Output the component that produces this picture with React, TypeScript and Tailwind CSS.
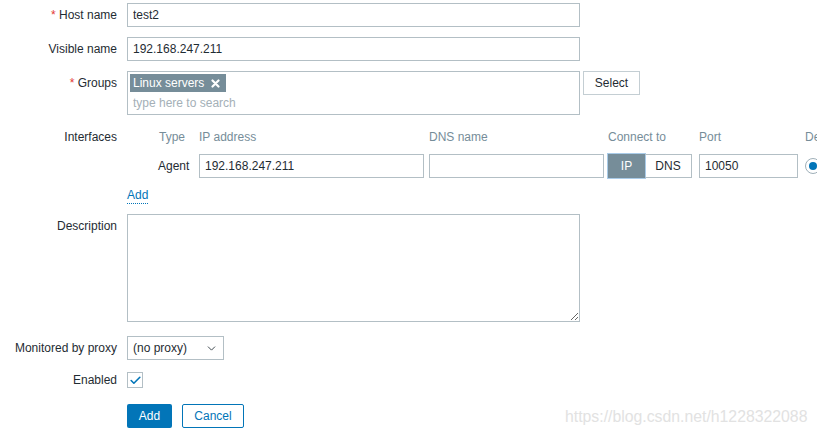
import { Check, ChevronDown } from 'lucide-react';

const font = { fontFamily: '"Liberation Sans", Arial, sans-serif' };

const inputCls =
  'h-[24px] border border-[#b3bfc5] bg-white px-[5px] text-[12px] text-[#1f2c33] outline-none';

function Label({ text, required, lh = 'leading-[24px]' }: { text: string; required?: boolean; lh?: string }) {
  return (
    <div className={`w-[117px] shrink-0 text-right text-[12px] text-[#1f2c33] ${lh}`}>
      {required && <span className="text-[#e33734]">* </span>}
      {text}
    </div>
  );
}

export default function App() {
  return (
    <div className="relative h-[436px] w-[817px] overflow-hidden bg-white" style={font}>
      <div className="flex flex-col pt-[3px]">
        <div className="flex gap-[10px]">
          <Label text="Host name" required />
          <input className={`${inputCls} w-[453px]`} defaultValue="test2" />
        </div>

        <div className="mt-[10px] flex gap-[10px]">
          <Label text="Visible name" />
          <input className={`${inputCls} w-[453px]`} defaultValue="192.168.247.211" />
        </div>

        <div className="mt-[10px] flex gap-[10px]">
          <Label text="Groups" required />
          <div className="flex h-[44px] w-[453px] flex-col border border-[#b3bfc5] px-[2px] pt-[2px]">
            <div className="flex h-[18px] w-fit items-center gap-[7px] bg-[#768d99] pl-[3px] pr-[6px] text-[12px] leading-[18px] text-white">
              Linux servers
              <svg width="9" height="9" viewBox="0 0 9 9">
                <path d="M1.5 1.5 L7.5 7.5 M7.5 1.5 L1.5 7.5" stroke="white" strokeWidth="2.2" strokeLinecap="round" />
              </svg>
            </div>
            <div className="pl-[3px] pt-[3px] text-[12px] leading-[16px] text-[#a4b0b7]">type here to search</div>
          </div>
          <button className="-ml-[7px] h-[24px] w-[57px] border border-[#c4ced3] bg-white text-[12px] text-[#1f2c33]">
            Select
          </button>
        </div>

        <div className="mt-[10px] flex gap-[10px]">
          <Label text="Interfaces" />
          <div className="flex flex-col">
            <div className="flex h-[24px] items-center text-[12px] text-[#768d99]">
              <div className="ml-[32px] w-[40px]">Type</div>
              <div className="w-[230px]">IP address</div>
              <div className="w-[179px]">DNS name</div>
              <div className="w-[91px]">Connect to</div>
              <div className="w-[106px]">Port</div>
              <div>Default</div>
            </div>
            <div className="mt-[5px] flex items-center text-[12px]">
              <div className="ml-[31px] w-[41px] text-[#1f2c33]">Agent</div>
              <input className={`${inputCls} w-[225px]`} defaultValue="192.168.247.211" />
              <input className={`${inputCls} ml-[5px] w-[175px]`} defaultValue="" />
              <div className="ml-[4px] flex h-[24px]">
                <div className="flex w-[37px] items-center justify-center bg-[#768d99] text-white shadow-[0_0_0_1px_#a9cbe8]">
                  IP
                </div>
                <div className="flex w-[47px] items-center justify-center border border-l-0 border-[#b3bfc5] text-[#1f2c33]">
                  DNS
                </div>
              </div>
              <input className={`${inputCls} ml-[7px] w-[99px]`} defaultValue="10050" />
              <div className="ml-[7px] flex h-[16px] w-[16px] shrink-0 items-center justify-center rounded-full border border-[#9fb0b9]">
                <div className="h-[8px] w-[8px] rounded-full bg-[#0275b8]" />
              </div>
            </div>
          </div>
        </div>

        <div className="mt-[10px] flex gap-[10px]">
          <div className="w-[117px] shrink-0" />
          <a className="h-[16px] border-b border-dotted border-[#0275b8] text-[12px] leading-[14px] text-[#0275b8]">Add</a>
        </div>

        <div className="mt-[10px] flex gap-[10px]">
          <Label text="Description" />
          <textarea className="h-[108px] w-[453px] border border-[#b3bfc5] bg-white outline-none" />
        </div>

        <div className="mt-[14px] flex gap-[10px]">
          <Label text="Monitored by proxy" />
          <div className="flex h-[24px] w-[97px] items-center justify-between border border-[#b3bfc5] pl-[5px] pr-[5px] text-[12px] text-[#1f2c33]">
            <span>(no proxy)</span>
            <ChevronDown size={13} strokeWidth={1.8} className="text-[#3d474d]" />
          </div>
        </div>

        <div className="mt-[12px] flex gap-[10px]">
          <Label text="Enabled" lh="leading-[16px]" />
          <div className="flex h-[16px] w-[16px] items-center justify-center border border-[#b3bfc5] bg-white">
            <Check size={13} strokeWidth={3} className="text-[#0275b8]" />
          </div>
        </div>

        <div className="mt-[16px] flex gap-[10px]">
          <div className="w-[117px] shrink-0" />
          <button className="h-[24px] w-[45px] rounded-[2px] bg-[#0275b8] text-[12px] text-white">Add</button>
          <button className="h-[24px] w-[62px] rounded-[2px] border border-[#0275b8] bg-white text-[12px] text-[#0275b8]">
            Cancel
          </button>
        </div>
      </div>

      <div className="absolute left-[565px] top-[407px] text-[15.8px] leading-[20px] text-[#e2e2e2]">
        https://blog.csdn.net/h1228322088
      </div>
    </div>
  );
}
